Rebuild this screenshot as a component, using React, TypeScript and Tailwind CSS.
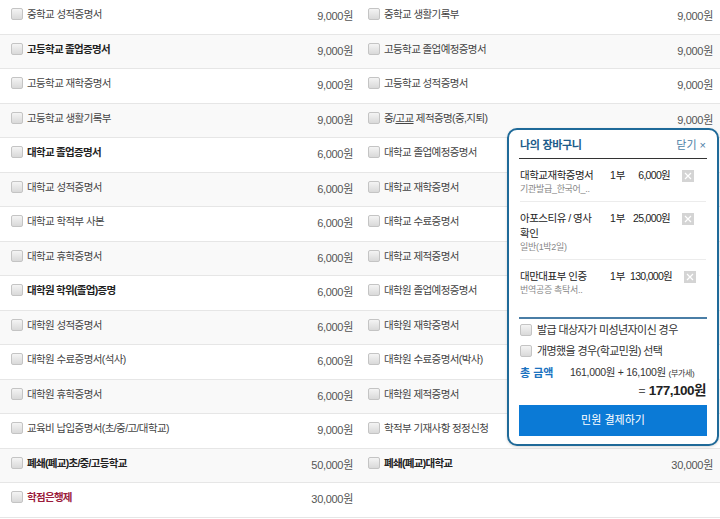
import React from "react";

type Item = { name: string; price?: string; bold?: boolean; red?: boolean; under?: boolean };

const left: Item[] = [
  { name: "중학교 성적증명서", price: "9,000원" },
  { name: "고등학교 졸업증명서", price: "9,000원", bold: true },
  { name: "고등학교 재학증명서", price: "9,000원" },
  { name: "고등학교 생활기록부", price: "9,000원" },
  { name: "대학교 졸업증명서", price: "6,000원", bold: true },
  { name: "대학교 성적증명서", price: "6,000원" },
  { name: "대학교 학적부 사본", price: "6,000원" },
  { name: "대학교 휴학증명서", price: "6,000원" },
  { name: "대학원 학위(졸업)증명", price: "6,000원", bold: true },
  { name: "대학원 성적증명서", price: "6,000원" },
  { name: "대학원 수료증명서(석사)", price: "6,000원" },
  { name: "대학원 휴학증명서", price: "6,000원" },
  { name: "교육비 납입증명서(초/중/고/대학교)", price: "9,000원" },
  { name: "폐쇄(폐교)초/중/고등학교", price: "50,000원", bold: true },
  { name: "학점은행제", price: "30,000원", bold: true, red: true },
];

const right: (Item | null)[] = [
  { name: "중학교 생활기록부", price: "9,000원" },
  { name: "고등학교 졸업예정증명서", price: "9,000원" },
  { name: "고등학교 성적증명서", price: "9,000원" },
  { name: "중/고교 제적증명(중,지퇴)", price: "9,000원", under: true },
  { name: "대학교 졸업예정증명서", price: "6,000원" },
  { name: "대학교 재학증명서", price: "6,000원" },
  { name: "대학교 수료증명서", price: "6,000원" },
  { name: "대학교 제적증명서", price: "6,000원" },
  { name: "대학원 졸업예정증명서", price: "6,000원" },
  { name: "대학원 재학증명서", price: "6,000원" },
  { name: "대학원 수료증명서(박사)", price: "6,000원" },
  { name: "대학원 제적증명서", price: "6,000원" },
  { name: "학적부 기재사항 정정신청", price: "9,000원" },
  { name: "폐쇄(폐교)대학교", price: "30,000원", bold: true },
  null,
];

const font = { fontFamily: '"Liberation Sans", "Noto Sans CJK KR", sans-serif' };

const Check = () => (
  <span className="block w-[12px] h-[12px] shrink-0 border border-[#c4c4c4] rounded-[2px] bg-gradient-to-b from-[#f4f4f4] to-[#d9d9d9]" />
);

const Cell = ({ item, pl }: { item: Item | null; pl: string }) => {
  if (!item) return <div className="w-[360px]" />;
  const nameCls = item.red
    ? "font-bold text-[#9b1b3b] tracking-[-0.7px]"
    : item.bold
    ? "font-bold text-[#222] tracking-[-0.7px]"
    : "text-[#444] tracking-[-0.6px]";
  return (
    <div className={`w-[360px] flex items-start justify-between pr-[7px] ${pl}`}>
      <div className="flex items-center gap-[4px] pt-[7px]">
        <Check />
        <span className={`text-[10.5px] leading-[14px] ${nameCls}`}>
          {item.under ? (
            <>
              중/<span className="underline">고교</span> 제적증명(중,지퇴)
            </>
          ) : (
            item.name
          )}
        </span>
      </div>
      <span className="pt-[9px] text-[11px] leading-[14px] text-[#555] tracking-[-0.3px]">{item.price}</span>
    </div>
  );
};

const CartItem = ({
  title,
  sub,
  price,
  last,
}: {
  title: React.ReactNode;
  sub: string;
  price: string;
  last?: boolean;
}) => (
  <div className={`flex items-start pt-[9px] pb-[6px] pr-[12px] ${last ? "" : "border-b border-[#ececec]"}`}>
    <div className="w-[90px] shrink-0">
      <div className="text-[10.5px] leading-[15px] text-[#222] tracking-[-0.5px]">{title}</div>
      <div className="text-[9px] leading-[12px] text-[#888] tracking-[-0.3px]">{sub}</div>
    </div>
    <span className="w-[20px] shrink-0 text-[10.5px] leading-[15px] text-[#222]">1부</span>
    <span className="flex-1 text-right text-[10.5px] leading-[15px] text-[#222] tracking-[-0.7px] whitespace-nowrap">
      {price}
    </span>
    <span className="ml-[12px] mt-[2px] w-[12px] h-[12px] shrink-0 bg-[#d4d4d4] flex items-center justify-center">
      <svg width="8" height="8" viewBox="0 0 8 8">
        <path d="M1 1L7 7M7 1L1 7" stroke="#fff" strokeWidth="1.2" />
      </svg>
    </span>
  </div>
);

export default function App() {
  return (
    <div className="relative w-[720px] h-[519px] overflow-hidden bg-white" style={font}>
      <div className="flex flex-col">
        {left.map((l, i) => (
          <div
            key={i}
            className={`flex h-[34.5px] border-b border-[#e6e6e6] ${i % 2 === 1 ? "bg-[#f9f9f9]" : "bg-white"}`}
          >
            <Cell item={l} pl="pl-[11px]" />
            <Cell item={right[i]} pl="pl-[8px]" />
          </div>
        ))}
      </div>

      <div className="absolute left-[507px] top-[128px] w-[212px] h-[318px] bg-white border-2 border-[#1f6a99] rounded-[10px] px-[10px] shadow-[0_1px_3px_rgba(0,0,0,0.15)]">
        <div className="flex items-center justify-between pt-[8px] pb-[6px] border-b border-[#333] px-[1px]">
          <span className="text-[11px] leading-[14px] font-bold text-[#1d5c8a] tracking-[-0.3px]">나의 장바구니</span>
          <span className="text-[11px] leading-[14px] text-[#4b7ea6]">닫기 ×</span>
        </div>
        <div className="px-[1px]">
          <CartItem title="대학교재학증명서" sub="기관발급_한국어_.." price="6,000원" />
          <CartItem
            title={
              <>
                아포스티유 / 영사
                <br />
                확인
              </>
            }
            sub="일반(1박2일)"
            price="25,000원"
          />
          <CartItem title="대만대표부 인증" sub="번역공증 촉탁서.." price="130,000원" last />
        </div>
        <div className="mt-[15px] border-t-2 border-[#4a7ea6]" />
        <div className="flex flex-col gap-[7px] pt-[4px] px-[1px]">
          <div className="flex items-center gap-[5px]">
            <Check />
            <span className="text-[11px] leading-[14px] text-[#333] tracking-[-0.6px]">발급 대상자가 미성년자이신 경우</span>
          </div>
          <div className="flex items-center gap-[5px]">
            <Check />
            <span className="text-[11px] leading-[14px] text-[#333] tracking-[-0.6px]">개명했을 경우(학교민원) 선택</span>
          </div>
        </div>
        <div className="flex items-center mt-[7px] px-[1px]">
          <span className="w-[50px] text-[11px] leading-[14px] font-bold text-[#1a72bf]">총 금액</span>
          <span className="text-[10.5px] leading-[14px] text-[#333] tracking-[-0.3px]">
            161,000원 + 16,100원 <span className="text-[8px]">(부가세)</span>
          </span>
        </div>
        <div className="text-right leading-[18px] pr-[1px]">
          <span className="text-[12px] text-[#555]">= </span>
          <span className="text-[13.5px] font-bold text-[#222] tracking-[-0.5px]">177,100원</span>
        </div>
        <button className="mt-[5px] w-full h-[31px] bg-[#0b7ad6] text-white text-[11px] flex items-center justify-center">
          민원 결제하기
        </button>
      </div>
    </div>
  );
}
